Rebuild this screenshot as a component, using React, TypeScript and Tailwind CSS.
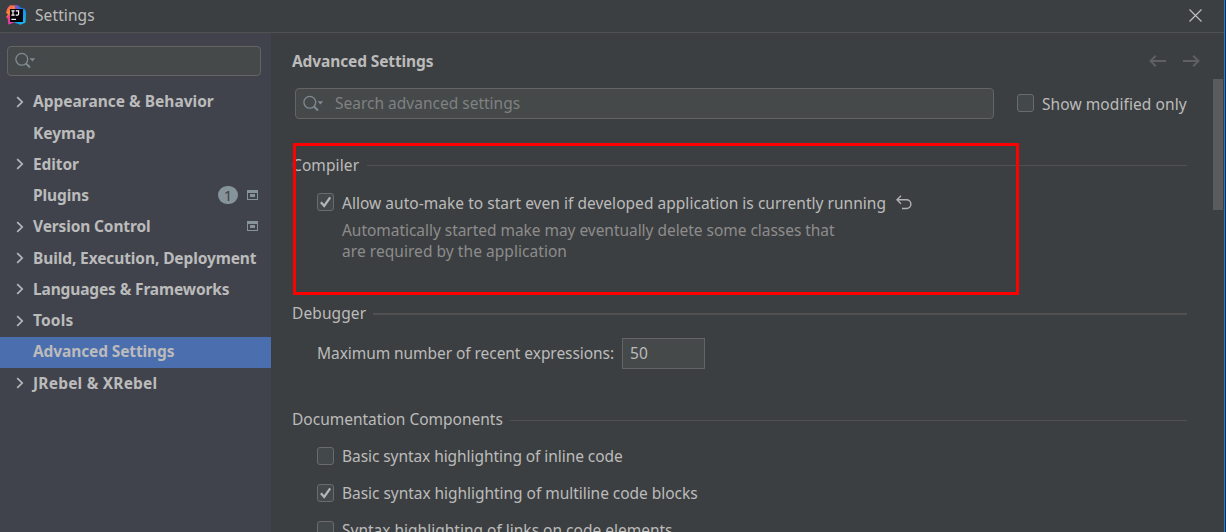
import React from "react";

type NavItem = {
  label: string;
  expandable?: boolean;
  badge?: string;
  project?: boolean;
  selected?: boolean;
  track: string;
};

const NAV: NavItem[] = [
  { label: "Appearance & Behavior", expandable: true, track: "tracking-normal" },
  { label: "Keymap", track: "tracking-normal" },
  { label: "Editor", expandable: true, track: "tracking-[-0.1px]" },
  { label: "Plugins", badge: "1", project: true, track: "tracking-[-0.1px]" },
  { label: "Version Control", expandable: true, project: true, track: "tracking-[-0.14px]" },
  { label: "Build, Execution, Deployment", expandable: true, track: "tracking-[-0.11px]" },
  { label: "Languages & Frameworks", expandable: true, track: "tracking-[-0.14px]" },
  { label: "Tools", expandable: true, track: "tracking-[0.15px]" },
  { label: "Advanced Settings", selected: true, track: "tracking-[-0.12px]" },
  { label: "JRebel & XRebel", expandable: true, track: "tracking-[0.2px]" },
];

function Logo() {
  return (
    <svg width="20" height="20" viewBox="0 0 20 20" className="mb-[3px] block shrink-0">
      <defs>
        <linearGradient id="warm" x1="0" y1="0" x2="0.4" y2="1">
          <stop offset="0" stopColor="#f4517a" />
          <stop offset="0.45" stopColor="#fc8a24" />
          <stop offset="0.6" stopColor="#f0418a" />
          <stop offset="1" stopColor="#f5317f" />
        </linearGradient>
        <linearGradient id="cool" x1="0" y1="0" x2="0.6" y2="1">
          <stop offset="0" stopColor="#2a5be8" />
          <stop offset="0.5" stopColor="#0b8cf5" />
          <stop offset="1" stopColor="#14b9f0" />
        </linearGradient>
      </defs>
      <path d="M1.5 3 L4 0.2 L10.5 0.5 L11 10 L8 16 L2.5 19.5 L1.6 13.5 L0 12 L2 9.5 L0 7.8 Z" fill="url(#warm)" />
      <path d="M2.5 19.5 L3 15 L9 15.5 L8 17.6 Z" fill="#e93bb4" />
      <path d="M9.5 0.8 L12 0.2 L15.2 3 L18.7 3.8 L20 7 L19.5 17.6 L14.6 19.8 L8 17.4 L15 14 Z" fill="url(#cool)" />
      <path d="M8.8 0.4 L12 0.2 L12.5 4 L9 4 Z" fill="#7a55c9" />
      <rect x="4" y="4" width="13" height="13" fill="#050208" />
      <path d="M5.4 5.9h3.2M7 5.9v4.2M5.4 10.1h3.2M9.8 5.9h2.8v3q0 1.2-1.2 1.2h-1.7" fill="none" stroke="#fff" strokeWidth="1.15" />
      <path d="M5.4 14.4h4.6" stroke="#fff" strokeWidth="1.2" />
    </svg>
  );
}

function Magnifier() {
  return (
    <svg width="21" height="18" viewBox="0 0 21 18" className="block shrink-0" fill="none">
      <circle cx="6.8" cy="7.3" r="5.9" stroke="#7f8b91" strokeWidth="1.3" />
      <path d="M11 11.5 L15 15.5" stroke="#7f8b91" strokeWidth="2" />
      <path d="M14.6 6.3h5.6l-2.8 3.1z" fill="#7f8b91" />
    </svg>
  );
}

function Chevron() {
  return (
    <svg width="8" height="12" viewBox="0 0 8 12" className="block" fill="none" stroke="#b4b8ba" strokeWidth="1.7">
      <path d="M1.2 1.1 L6.2 6 L1.2 10.9" />
    </svg>
  );
}

function ProjectIcon() {
  return (
    <svg width="11" height="10" viewBox="0 0 11 10" className="block">
      <path d="M0 0h11v10H0z M1 3v6h9V3z" fillRule="evenodd" fill="#87939a" />
      <rect x="3" y="4" width="5" height="3" fill="#87939a" />
    </svg>
  );
}

function Checkbox({ checked }: { checked?: boolean }) {
  return (
    <span className="mb-[2px] block h-[18px] w-[17px] shrink-0 rounded-[3px] border border-[#6b6b6b] bg-[#43494a]">
      {checked && (
        <svg width="15" height="16" viewBox="0 0 15 16" className="block" fill="none" stroke="#b4b5b5">
          <path d="M2.9 8.2 L6.2 12 L12.2 3.4" strokeWidth="2.3" />
        </svg>
      )}
    </span>
  );
}

function SectionTitle({ title, track, line }: { title: string; track: string; line: string }) {
  return (
    <div className="flex h-[22px] items-center">
      <span className={track}>{title}</span>
      <span className={`mr-[37px] flex-1 bg-[#515151] ${line}`} />
    </div>
  );
}

export default function App() {
  return (
    <div className="relative flex h-[532px] w-[1226px] overflow-hidden bg-[#3c3f41] font-['Noto_Sans','Open_Sans',sans-serif] text-[15.5px] leading-[21px] whitespace-nowrap text-[#bbbbbb]">
      <div className="flex w-[1224px] shrink-0 flex-col">
        <header className="flex h-[33px] shrink-0 items-center border-b border-[#515151] pl-[6px]">
          <Logo />
          <span className="mb-[2px] ml-[9px] tracking-[0.1px]">Settings</span>
          <svg width="13" height="13" viewBox="0 0 13 13" className="mr-[22.5px] mb-[2px] ml-auto block" stroke="#bdbebf" strokeWidth="1.2">
            <path d="M0.5 0.5 L12.5 12.5 M12.5 0.5 L0.5 12.5" />
          </svg>
        </header>
        <div className="flex min-h-0 flex-1">
          <aside className="w-[271px] shrink-0 bg-[#40434c] pt-[13px]">
            <div className="ml-[7px] flex h-[30px] w-[254px] items-center rounded-[4px] border border-[#646464] bg-[#45494a] pl-[7px]">
              <Magnifier />
            </div>
            <nav className="mt-[10.8px] font-bold">
              {NAV.map((n) => (
                <div
                  key={n.label}
                  className={
                    n.selected
                      ? "flex h-[31.25px] items-center bg-[#4b6eaf] pr-[13px] pl-4"
                      : "flex h-[31.25px] items-center pr-[13px] pl-4"
                  }
                >
                  <span className="w-[17px] shrink-0 pb-px">{n.expandable && <Chevron />}</span>
                  <span className={`pb-px ${n.track}`}>{n.label}</span>
                  <span className="ml-auto flex items-center gap-[9px] pb-[2px]">
                    {n.badge && (
                      <span className="flex h-[18px] w-5 items-center justify-center rounded-full bg-[#87939a] text-[15px] font-normal text-[#3c444b]">
                        {n.badge}
                      </span>
                    )}
                    {n.project && <ProjectIcon />}
                  </span>
                </div>
              ))}
            </nav>
          </aside>
          <main className="min-w-0 flex-1 overflow-hidden pl-[21px]">
            <div className="flex h-[55px] items-center pr-[24px]">
              <h1 className="pt-[2px] font-bold tracking-[-0.12px]">Advanced Settings</h1>
              <svg width="51" height="12" viewBox="0 0 51 12" className="ml-auto block" fill="none" stroke="#5e6061" strokeWidth="1.9">
                <path d="M17 6H1.5M6.8 0.8L1.5 6L6.8 11.2M34 6H49.5M44.2 0.8L49.5 6L44.2 11.2" />
              </svg>
            </div>
            <div className="ml-[3px] flex h-[31px] items-center">
              <div className="flex h-[31px] w-[698.5px] shrink-0 items-center rounded-[4px] border border-[#646464] bg-[#45494a] pl-[7px]">
                <Magnifier />
                <span className="ml-[11px] text-[#7f8182]">Search advanced settings</span>
              </div>
              <div className="ml-[23.5px] flex items-center">
                <Checkbox />
                <span className="ml-[8px] pt-[2px] tracking-[0.08px]">Show modified only</span>
              </div>
            </div>
            <div className="mt-[35px]">
              <SectionTitle title="Compiler" track="tracking-[0.1px]" line="mt-px ml-[8px] h-px" />
              <div className="mt-[16px] ml-[25px] flex h-[22px] items-center">
                <Checkbox checked />
                <span className="ml-[8px] tracking-[0.03px]">Allow auto-make to start even if developed application is currently running</span>
                <svg width="16" height="15" viewBox="0 0 16 15" className="mb-[2px] ml-[10px] block" fill="none" stroke="#afb1b3" strokeWidth="1.4">
                  <path d="M5 0.7 L1 4.7 L5 8.7 M1 4.7 H10.5 A4.4 4.4 0 0 1 10.5 13.5 H6" />
                </svg>
              </div>
              <p className="mt-[6px] ml-[50px] text-[#8c8c8c]">
                <span className="tracking-[-0.04px]">Automatically started make may eventually delete some classes that</span>
                <br />
                <span className="tracking-[0.05px]">are required by the application</span>
              </p>
            </div>
            <div className="mt-[40px]">
              <SectionTitle title="Debugger" track="tracking-[0.1px]" line="mt-px ml-[7px] h-[2px]" />
              <div className="mt-[14px] ml-[25px] flex h-[31px] items-center">
                <span className="tracking-[-0.06px]">Maximum number of recent expressions:</span>
                <span className="ml-[8px] flex h-[31px] w-[83px] items-center border border-[#646464] bg-[#45494a] pl-[7px]">50</span>
              </div>
            </div>
            <div className="mt-[40px]">
              <SectionTitle title="Documentation Components" track="tracking-normal pb-px" line="ml-[7px] h-px" />
              <div className="mt-[7px] ml-[25px]">
                <div className="flex h-[37px] items-center gap-[8px]">
                  <Checkbox />
                  <span className="tracking-[-0.07px]">Basic syntax highlighting of inline code</span>
                </div>
                <div className="flex h-[37px] items-center gap-[8px]">
                  <Checkbox checked />
                  <span className="tracking-[-0.04px]">Basic syntax highlighting of multiline code blocks</span>
                </div>
                <div className="flex h-[37px] items-center gap-[8px]">
                  <Checkbox />
                  <span>Syntax highlighting of links on code elements</span>
                </div>
              </div>
            </div>
          </main>
        </div>
      </div>
      <div className="w-px bg-[#1683d8]" />
      <div className="w-px bg-[#10253f]" />
      <div className="absolute top-[79px] left-[1213px] h-[131px] w-[10px] bg-[#595b5d]" />
      <div className="absolute top-[143px] left-[293px] h-[152px] w-[726px] border-[3px] border-[#ff0000]" />
    </div>
  );
}
